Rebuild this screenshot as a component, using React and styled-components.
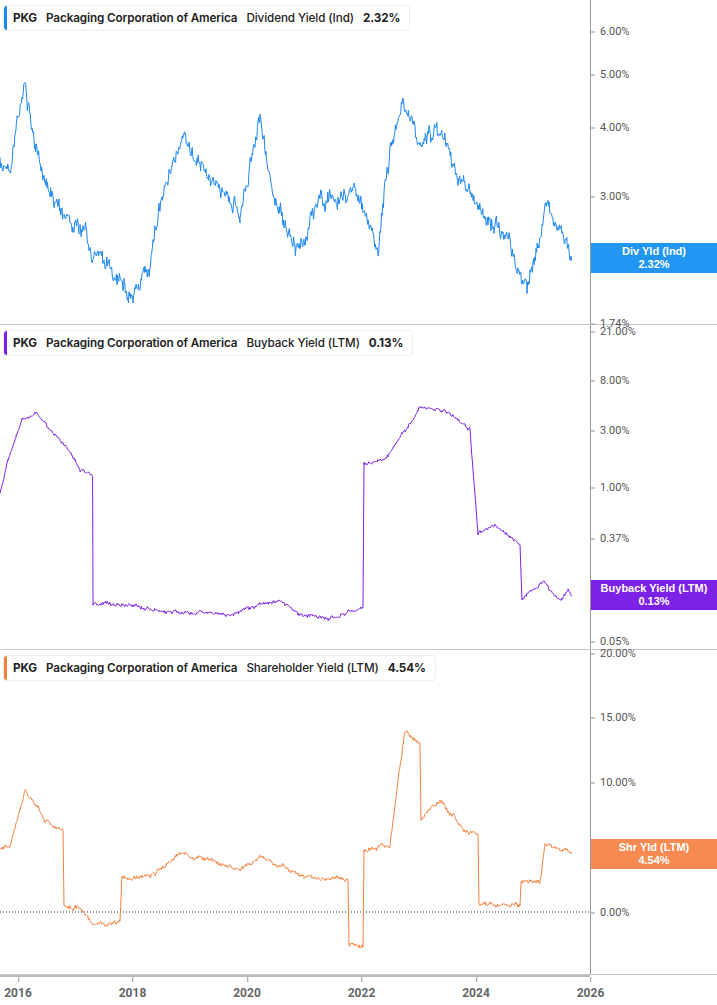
import React from "react";
import styled, { createGlobalStyle } from "styled-components";

const G = createGlobalStyle`
  body{margin:0;background:#fff;font-family:Inter,"Liberation Sans",sans-serif;}
`;
const Page = styled.div`width:717px;height:1005px;display:flex;flex-direction:column;overflow:hidden;`;
const Panel = styled.div`display:flex;height:${p => p.h}px;border-bottom:1px solid #c8c8c8;box-sizing:border-box;`;
const Plot = styled.div`position:relative;width:590px;flex:none;`;
const Axis = styled.div`position:relative;flex:1;border-left:1px solid #999;`;
const Tick = styled.div`position:absolute;left:0;font-size:11px;color:#555;font-family:Roboto,"Liberation Sans",sans-serif;
  transform:translateY(-50%);padding-left:9px;&:before{content:"";position:absolute;left:0;top:50%;width:4px;border-top:1px solid #999;}`;
const Badge = styled.div`position:absolute;left:0;right:0;background:${p => p.c};color:#fff;font-size:11px;font-weight:700;
  text-align:center;line-height:13px;padding:2px 0;font-family:"Liberation Sans",sans-serif;`;
const Legend = styled.div`position:absolute;left:3px;top:5px;display:flex;gap:9px;align-items:center;height:24px;padding:0 9px 0 9px;
  background:#fff;border:1px solid #eee;border-radius:3px;font-size:11.7px;color:#222;letter-spacing:-0.1px;
  &:before{content:"";position:absolute;left:0;top:0;bottom:0;width:3px;border-radius:3px 0 0 3px;background:${p => p.c};}`;
const B = styled.span`font-weight:${p => p.w};`;
const Svg = styled.svg`position:absolute;left:0;top:0;`;
const XAxis = styled.div`display:flex;height:30px;`;
const XPlot = styled.div`position:relative;width:590px;border-top:2px solid #bbb;`;
const Year = styled.div`position:absolute;top:0;transform:translateX(-50%);font-size:12px;font-weight:700;color:#666;
  font-family:Roboto,"Liberation Sans",sans-serif;padding-top:9px;&:before{content:"";position:absolute;left:50%;top:0;height:5px;border-left:1px solid #999;}`;

function rnd(seed){let s=seed;return()=>{s=(s*16807)%2147483647;return s/2147483647-0.5;};}
function series(pts, noise, jit, seed, off){
  const r=rnd(seed);let d="";let drift=0;
  for(let i=0;i<pts.length-1;i++){
    const [x0,y0]=pts[i],[x1,y1]=pts[i+1];
    if(x1===x0){d+=`L${x1},${y1-off}`;continue;}
    for(let x=x0;x<x1;x+=0.6){
      const t=(x-x0)/(x1-x0);drift=drift*0.8+r()*noise;
      const y=y0+(y1-y0)*t+drift+r()*jit-off;
      d+=(d?"L":"M")+x.toFixed(1)+","+y.toFixed(1);
    }
  }
  return d;
}
const panels=[
  {h:325,off:0,c:"#1e88f0",bc:"#2196f3",metric:"Dividend Yield (Ind)",val:"2.32%",badge:["Div Yld (Ind)","2.32%"],by:243,noise:10,jit:9,
   ticks:[["6.00%",31],["5.00%",74],["4.00%",127],["3.00%",196],["2.24%",264],["1.74%",323]],
   pts:[[0,165],[10,175],[25,80],[35,150],[50,200],[80,230],[105,260],[133,295],[150,265],[160,205],[185,130],[210,180],[240,210],[260,120],[275,200],[298,255],[320,200],[355,190],[378,245],[390,145],[403,100],[420,140],[440,130],[460,175],[485,215],[510,240],[527,288],[548,210],[565,235],[572,260]]},
  {h:325,off:325,c:"#7b1fe8",bc:"#7b22e6",metric:"Buyback Yield (LTM)",val:"0.13%",badge:["Buyback Yield (LTM)","0.13%"],by:580,noise:2,jit:2,
   ticks:[["21.00%",331],["8.00%",380],["3.00%",430],["1.00%",487],["0.37%",538],["0.05%",641]],
   pts:[[0,495],[8,460],[22,420],[35,412],[50,430],[65,445],[80,470],[93,475],[93,603],[130,605],[165,612],[200,613],[230,615],[260,605],[280,600],[300,615],[330,618],[363,608],[364,465],[385,460],[405,430],[420,408],[445,410],[470,430],[478,535],[495,525],[520,545],[522,598],[545,583],[560,603],[568,590],[572,595]]},
  {h:325,off:650,c:"#f5823f",bc:"#f78a50",metric:"Shareholder Yield (LTM)",val:"4.54%",badge:["Shr Yld (LTM)","4.54%"],by:839,noise:2.5,jit:2.5,dotted:912,
   ticks:[["20.00%",653],["15.00%",717],["10.00%",782],["5.00%",847],["0.00%",912]],
   pts:[[0,850],[10,845],[25,790],[45,820],[63,830],[64,905],[80,908],[93,925],[120,922],[122,878],[150,875],[180,855],[210,860],[240,870],[260,855],[300,875],[345,880],[348,878],[349,945],[363,945],[364,850],[390,845],[405,730],[420,745],[421,820],[440,800],[465,830],[478,835],[479,903],[520,905],[521,882],[540,880],[545,845],[565,850],[572,855]]},
];

export default function App(){
  return <Page><G/>
    {panels.map((p,i)=>(
      <Panel key={i} h={p.h}>
        <Plot>
          <Svg width="590" height={p.h}>
            {p.dotted&&<line x1="0" x2="590" y1={p.dotted-p.off} y2={p.dotted-p.off} stroke="#333" strokeDasharray="1 2"/>}
            <path d={series(p.pts,p.noise,p.jit,17+i*31,p.off)} fill="none" stroke={p.c} strokeWidth="1"/>
          </Svg>
          <Legend c={p.c}><B w={700}>PKG</B><B w={600}>Packaging Corporation of America</B><B w={500}>{p.metric}</B><B w={700}>{p.val}</B></Legend>
        </Plot>
        <Axis>
          {p.ticks.map(([t,y])=><Tick key={t} style={{top:y-p.off}}>{t}</Tick>)}
          <Badge c={p.bc} style={{top:p.by-p.off}}>{p.badge[0]}<br/>{p.badge[1]}</Badge>
        </Axis>
      </Panel>
    ))}
    <XAxis><XPlot>{[2016,2018,2020,2022,2024,2026].map((y,i)=><Year key={y} style={{left:18+i*114.5}}>{y}</Year>)}</XPlot></XAxis>
  </Page>;
}
